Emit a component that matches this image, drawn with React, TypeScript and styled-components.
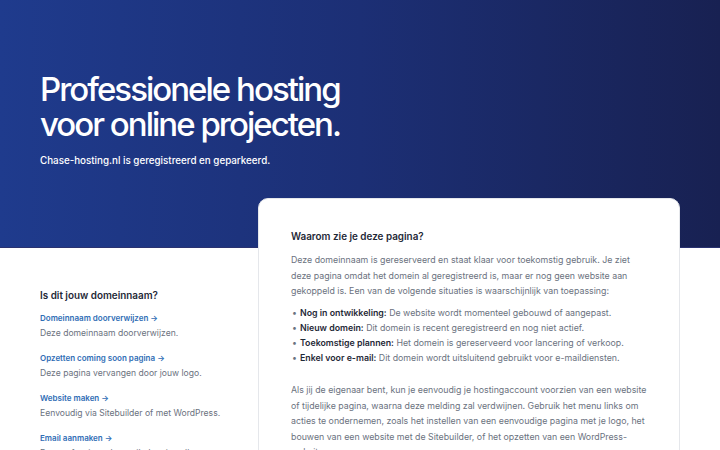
import React from 'react';
import styled, { createGlobalStyle } from 'styled-components';

const GlobalStyle = createGlobalStyle`
  * {
    box-sizing: border-box;
  }
  body {
    margin: 0;
    background: #ffffff;
    font-family: Inter, "Noto Sans", sans-serif;
    -webkit-font-smoothing: antialiased;
  }
`;

const Hero = styled.header`
  background: linear-gradient(90deg, #1f3b8d 0%, #1c2f75 50%, #182152 100%);
  height: 248px;
  padding: 72px 40px 0;
  border-bottom: 1px solid #2a3270;
`;

const Headline = styled.h1`
  margin: 0;
  color: #ffffff;
  font-size: 33px;
  line-height: 35px;
  font-weight: 500;
  letter-spacing: -0.06em;
`;

const Subline = styled.p`
  margin: 13px 0 0;
  color: #ffffff;
  font-size: 9.8px;
  font-weight: 500;
`;

const Main = styled.main`
  display: grid;
  grid-template-columns: 200px 1fr;
  gap: 18px;
  padding: 0 40px;
`;

const Side = styled.aside`
  padding-top: 40px;
`;

const SideTitle = styled.h2`
  margin: 0 0 9px;
  font-size: 9.9px;
  line-height: 14px;
  font-weight: 600;
  color: #1f2937;
`;

const Action = styled.div`
  margin-bottom: 10px;
`;

const ActionLink = styled.a`
  display: block;
  font-size: 8px;
  font-weight: 600;
  color: #2f6db5;
  text-decoration: none;
  line-height: 15px;
`;

const ActionText = styled.p`
  margin: 0;
  font-size: 8.6px;
  line-height: 15px;
  color: #6b7280;
`;

const Card = styled.section`
  margin-top: -50px;
  background: #ffffff;
  border: 1px solid #e5e7eb;
  border-radius: 10px;
  padding: 30px 32px 0;
  min-height: 260px;
`;

const CardTitle = styled.h3`
  margin: 0 0 9px;
  font-size: 9.9px;
  line-height: 14px;
  font-weight: 600;
  color: #1f2937;
`;

const Paragraph = styled.p`
  margin: 0 0 6.5px;
  font-size: 8.8px;
  line-height: 15.5px;
  color: #6b7280;
`;

const List = styled.ul`
  margin: 0 0 17px;
  padding: 0;
  list-style: none;
  font-size: 8.8px;
  line-height: 15px;
  color: #6b7280;
`;

const Item = styled.li`
  position: relative;
  padding-left: 9px;
  &::before {
    content: '•';
    position: absolute;
    left: 1px;
    top: 0;
    color: #6b7280;
  }
`;

const Strong = styled.strong`
  color: #1f2937;
  font-weight: 600;
`;

const actions = [
  { title: 'Domeinnaam doorverwijzen', text: 'Deze domeinnaam doorverwijzen.' },
  { title: 'Opzetten coming soon pagina', text: 'Deze pagina vervangen door jouw logo.' },
  { title: 'Website maken', text: 'Eenvoudig via Sitebuilder of met WordPress.' },
  { title: 'Email aanmaken', text: 'Een professioneel e-mailadres instellen.' },
];

const reasons = [
  { label: 'Nog in ontwikkeling:', text: 'De website wordt momenteel gebouwd of aangepast.' },
  { label: 'Nieuw domein:', text: 'Dit domein is recent geregistreerd en nog niet actief.' },
  { label: 'Toekomstige plannen:', text: 'Het domein is gereserveerd voor lancering of verkoop.' },
  { label: 'Enkel voor e-mail:', text: 'Dit domein wordt uitsluitend gebruikt voor e-maildiensten.' },
];

export default function App() {
  return (
    <>
      <GlobalStyle />
      <Hero>
        <Headline>
          Professionele hosting
          <br />
          voor online projecten.
        </Headline>
        <Subline>Chase-hosting.nl is geregistreerd en geparkeerd.</Subline>
      </Hero>
      <Main>
        <Side>
          <SideTitle>Is dit jouw domeinnaam?</SideTitle>
          {actions.map((a) => (
            <Action key={a.title}>
              <ActionLink href="#">{a.title} →</ActionLink>
              <ActionText>{a.text}</ActionText>
            </Action>
          ))}
        </Side>
        <Card>
          <CardTitle>Waarom zie je deze pagina?</CardTitle>
          <Paragraph>
            Deze domeinnaam is gereserveerd en staat klaar voor toekomstig gebruik. Je ziet
            deze pagina omdat het domein al geregistreerd is, maar er nog geen website aan
            gekoppeld is. Een van de volgende situaties is waarschijnlijk van toepassing:
          </Paragraph>
          <List>
            {reasons.map((r) => (
              <Item key={r.label}>
                <Strong>{r.label}</Strong> {r.text}
              </Item>
            ))}
          </List>
          <Paragraph>
            Als jij de eigenaar bent, kun je eenvoudig je hostingaccount voorzien van een website
            of tijdelijke pagina, waarna deze melding zal verdwijnen. Gebruik het menu links om
            acties te ondernemen, zoals het instellen van een eenvoudige pagina met je logo, het
            bouwen van een website met de Sitebuilder, of het opzetten van een WordPress-website.
          </Paragraph>
        </Card>
      </Main>
    </>
  );
}
